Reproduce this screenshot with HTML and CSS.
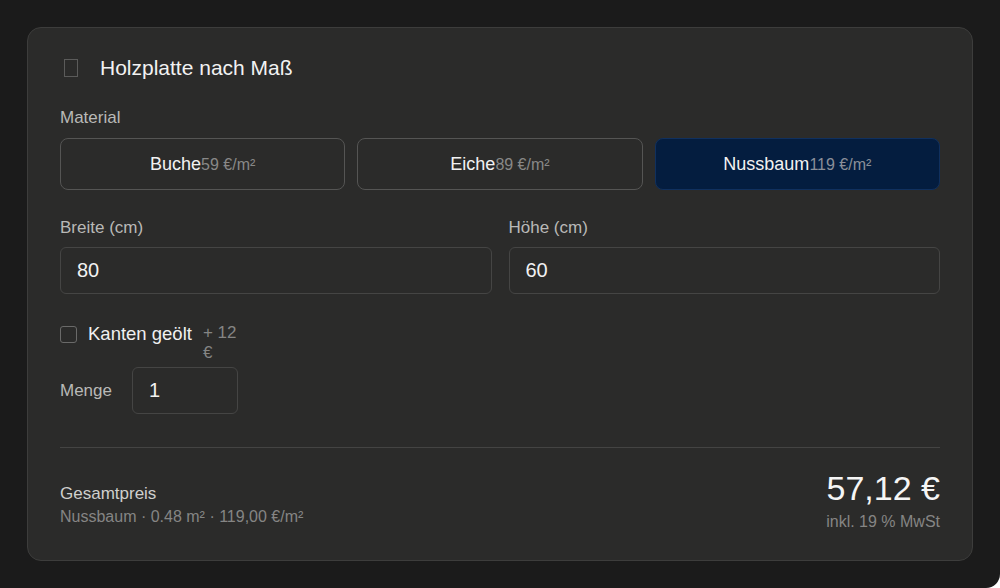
FILE: index.html
```html
<!DOCTYPE html>
<html lang="de">
<head>
    <meta charset="UTF-8">
    <meta name="viewport" content="width=device-width, initial-scale=1.0">
    <title>Holzplatte nach Maß</title>
    <link rel="stylesheet" href="styles.css">
</head>
<body>
    <main class="card">
        <header class="card-head">
            <span class="thumb"></span>
            <h1>Holzplatte nach Maß</h1>
        </header>

        <section class="field">
            <div class="label">Material</div>
            <div class="materials">
                <button class="material">Buche<span class="rate">59 €/m²</span></button>
                <button class="material">Eiche<span class="rate">89 €/m²</span></button>
                <button class="material active">Nussbaum<span class="rate">119 €/m²</span></button>
            </div>
        </section>

        <section class="dims">
            <div class="dim">
                <label class="label" for="breite">Breite (cm)</label>
                <input class="text-input" id="breite" type="text" value="80">
            </div>
            <div class="dim">
                <label class="label" for="hoehe">Höhe (cm)</label>
                <input class="text-input" id="hoehe" type="text" value="60">
            </div>
        </section>

        <div class="option">
            <span class="check"></span>
            <span class="option-name">Kanten geölt</span>
            <span class="option-extra">+ 12 €</span>
        </div>

        <div class="qty">
            <label class="label" for="menge">Menge</label>
            <input class="text-input qty-input" id="menge" type="text" value="1">
        </div>

        <footer class="total">
            <div class="total-left">
                <div class="total-label">Gesamtpreis</div>
                <div class="total-sub">Nussbaum · 0.48 m² · 119,00 €/m²</div>
            </div>
            <div class="total-right">
                <div class="price">57,12 €</div>
                <div class="total-sub">inkl. 19 % MwSt</div>
            </div>
        </footer>
    </main>
</body>
</html>
```

FILE: styles.css
```css
html {
    background: #ffffff;
}

body {
    margin: 0;
    height: 588px;
    padding: 27px;
    box-sizing: border-box;
    background: #1b1b1b;
    border-bottom-right-radius: 14px;
    font-family: "Liberation Sans", Arial, sans-serif;
    color: #f0f0f0;
}

.card {
    height: 534px;
    box-sizing: border-box;
    background: #2b2b2a;
    border: 1px solid #3d3d3c;
    border-radius: 14px;
    padding: 28px 32px 0;
}

.card-head {
    display: flex;
    align-items: center;
    height: 24px;
}

.thumb {
    width: 12px;
    height: 16px;
    border: 1px solid #5b5b5a;
    margin: 0 0 0 4px;
}

h1 {
    margin: 0 0 0 22px;
    font-size: 21px;
    font-weight: normal;
    color: #f2f2f2;
}

.label {
    display: block;
    font-size: 17px;
    color: #b9b9b7;
}

.field {
    margin-top: 28px;
}

.materials {
    display: grid;
    grid-template-columns: repeat(3, 1fr);
    gap: 12px;
    margin-top: 10px;
}

.material {
    height: 52px;
    background: #2b2b2a;
    border: 1px solid #555554;
    border-radius: 8px;
    color: #f2f2f2;
    font-family: inherit;
    font-size: 18px;
}

.material .rate {
    font-size: 16px;
    color: #888887;
}

.material.active {
    background: #041d3f;
    border-color: #10305e;
}

.material.active .rate {
    color: #8a8f99;
}

.dims {
    display: grid;
    grid-template-columns: 1fr 1fr;
    gap: 17px;
    margin-top: 28px;
}

.text-input {
    display: block;
    width: 100%;
    height: 47px;
    box-sizing: border-box;
    margin-top: 9px;
    padding: 0 16px;
    background: #2b2b2a;
    border: 1px solid #454544;
    border-radius: 6px;
    color: #f2f2f2;
    font-family: inherit;
    font-size: 20px;
}

.option {
    display: flex;
    align-items: flex-start;
    margin-top: 29px;
}

.check {
    width: 15px;
    height: 15px;
    border: 1px solid #6a6a69;
    border-radius: 3px;
    margin-top: 3px;
}

.option-name {
    margin-left: 11px;
    font-size: 18.5px;
    line-height: 22px;
}

.option-extra {
    width: 42px;
    margin-left: 11px;
    font-size: 17px;
    line-height: 20px;
    color: #858584;
}

.qty {
    display: flex;
    align-items: center;
    gap: 20px;
    margin-top: 4px;
}

.qty-input {
    width: 106px;
    margin-top: 0;
}

.total {
    display: flex;
    justify-content: space-between;
    align-items: flex-end;
    margin-top: 33px;
    padding-top: 20px;
    border-top: 1px solid #444443;
}

.total-left {
    margin-bottom: 5px;
}

.total-label {
    font-size: 17px;
    color: #cfcfcd;
}

.total-sub {
    margin-top: 4px;
    font-size: 16px;
    color: #858584;
}

.total-right {
    text-align: right;
}

.total-right .total-sub {
    margin-top: 5px;
}

.price {
    font-size: 34px;
    line-height: 40px;
    color: #f5f5f5;
}
```
